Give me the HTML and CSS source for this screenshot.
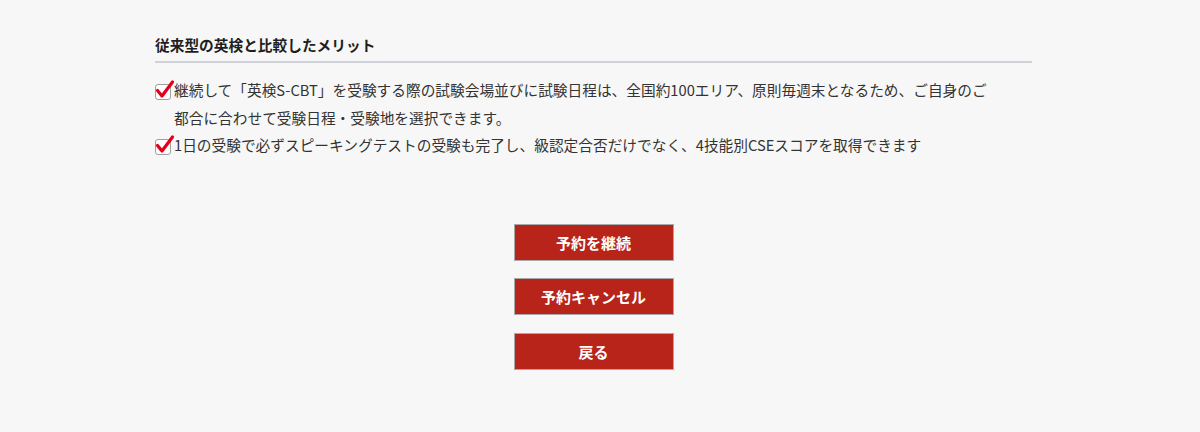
FILE: index.html
```html
<!DOCTYPE html>
<html lang="ja">
<head>
<meta charset="utf-8">
<title>予約確認</title>
<link rel="stylesheet" href="styles.css">
</head>
<body>
<div class="page">
  <section class="merit">
    <h2 class="merit-title">従来型の英検と比較したメリット</h2>
    <ul class="merit-list">
      <li class="merit-item"><span class="check"><svg width="20" height="22" viewBox="0 0 20 22"><rect x="0.5" y="5.5" width="15" height="15" rx="2.5" fill="#fff" stroke="#a0a0a0"/><path d="M2.5 11.5 L7 17 L17.5 3" fill="none" stroke="#e5001a" stroke-width="3.2" stroke-linecap="round" stroke-linejoin="round"/></svg></span>継続して「英検S-CBT」を受験する際の試験会場並びに試験日程は、全国約100エリア、原則毎週末となるため、ご自身のご都合に合わせて受験日程・受験地を選択できます。</li>
      <li class="merit-item"><span class="check"><svg width="20" height="22" viewBox="0 0 20 22"><rect x="0.5" y="5.5" width="15" height="15" rx="2.5" fill="#fff" stroke="#a0a0a0"/><path d="M2.5 11.5 L7 17 L17.5 3" fill="none" stroke="#e5001a" stroke-width="3.2" stroke-linecap="round" stroke-linejoin="round"/></svg></span>1日の受験で必ずスピーキングテストの受験も完了し、級認定合否だけでなく、4技能別CSEスコアを取得できます</li>
    </ul>
  </section>
  <div class="actions">
    <button class="btn" type="button">予約を継続</button>
    <button class="btn" type="button">予約キャンセル</button>
    <button class="btn" type="button">戻る</button>
  </div>
</div>
</body>
</html>
```

FILE: styles.css
```css
html, body {
  margin: 0;
  padding: 0;
  background: #f7f7f7;
}
body {
  font-family: "Noto Sans CJK JP", "Noto Sans", sans-serif;
  color: #333;
  font-size: 14.7px;
}
.page {
  width: 877px;
  margin-left: 155px;
  padding-top: 35px;
}
.merit-title {
  margin: 0;
  font-size: 14.7px;
  line-height: 20px;
  font-weight: bold;
  color: #1e1e1e;
  padding-bottom: 6px;
  border-bottom: 2px solid #cfd3d9;
}
.merit-list {
  list-style: none;
  margin: 13px 0 0 0;
  padding: 0;
  width: 838px;
}
.merit-item {
  position: relative;
  padding-left: 19px;
  line-height: 27.5px;
}
.check {
  position: absolute;
  left: 0;
  top: 3px;
  width: 20px;
  height: 22px;
}
.check svg {
  display: block;
}
.actions {
  margin-top: 65px;
  display: flex;
  flex-direction: column;
  align-items: center;
  gap: 17.5px;
}
.btn {
  width: 160px;
  height: 37px;
  background: #b8241a;
  border: 1px solid #a9a9a9;
  color: #fff;
  font-family: "Noto Sans CJK JP", "Noto Sans", sans-serif;
  font-size: 15px;
  font-weight: bold;
  padding: 0;
  margin: 0;
}
```
